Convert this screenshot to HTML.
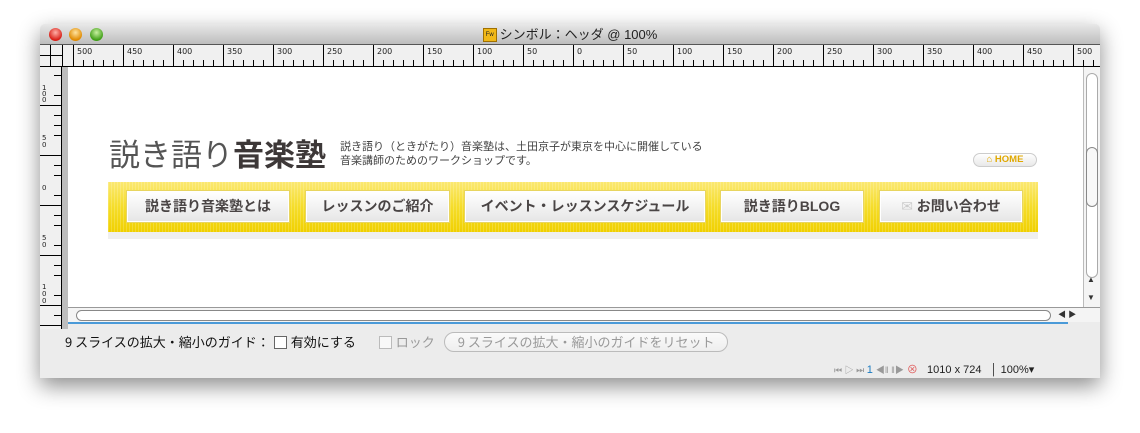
<!DOCTYPE html>
<html><head><meta charset="utf-8">
<style>
*{margin:0;padding:0;box-sizing:border-box}
body{width:1140px;height:433px;background:#fff;position:relative;overflow:hidden;font-family:"Liberation Sans","Noto Sans CJK JP",sans-serif}
.win{position:absolute;left:40px;top:24px;width:1060px;height:354px;background:#ececec;box-shadow:0 8px 22px rgba(0,0,0,.45);border-radius:5px 5px 0 0}
.title{position:absolute;left:0;top:0;width:1060px;height:21px;background:linear-gradient(#e8e8e8,#bdbdbd);border-radius:5px 5px 0 0;border-bottom:1px solid #555;text-align:center;font-size:13px;line-height:21px;color:#222}
.dot{position:absolute;top:4px;width:13px;height:13px;border-radius:50%}
.canvas{position:absolute;left:28px;top:43px;width:1015px;height:240px;background:#fff}
.nav{position:absolute;left:40px;top:115px;width:930px;height:50px;background:repeating-linear-gradient(90deg,rgba(255,255,255,.18) 0 1px,transparent 1px 3px),linear-gradient(#fbe870,#f5dd2a 50%,#f0d000)}
.btn{position:absolute;top:9px;height:31px;background:linear-gradient(#fff,#f3f3f3 50%,#e6e6e6);border:1px solid #fff;box-shadow:0 0 0 1px #e8d560;font-size:14px;font-weight:bold;color:#4a4545;text-align:center;line-height:29px}
</style></head><body>
<div class="win">
 <div class="title">
  <div class="dot" style="left:9px;background:radial-gradient(circle at 50% 35%,#ffb0a8,#d81e16 70%)"></div>
  <div class="dot" style="left:29px;background:radial-gradient(circle at 50% 35%,#ffe4a0,#e08a00 70%)"></div>
  <div class="dot" style="left:50px;background:radial-gradient(circle at 50% 35%,#c8f0a0,#3f9e16 70%)"></div>
  <span style="display:inline-block;width:14px;height:14px;background:#f0b818;border:1px solid #a07000;font-size:6px;line-height:12px;vertical-align:middle;margin-right:3px;position:relative;top:-1px">Fw</span>シンボル：ヘッダ @ 100%
 </div>
 <svg style="position:absolute;left:0;top:21px" width="1060" height="22">
  <defs><pattern id="tk" x="33" y="0" width="50" height="22" patternUnits="userSpaceOnUse">
   <rect x="0" y="0" width="1" height="22" fill="#000"/>
   <rect x="10" y="15" width="1" height="7" fill="#000"/><rect x="20" y="15" width="1" height="7" fill="#000"/>
   <rect x="30" y="15" width="1" height="7" fill="#000"/><rect x="40" y="15" width="1" height="7" fill="#000"/>
  </pattern></defs>
  <rect width="1060" height="22" fill="#f0f0f0"/>
  <rect x="28" width="1032" height="22" fill="url(#tk)"/>
  <rect x="0" y="21" width="1060" height="1" fill="#000"/>
  <rect x="22" y="0" width="1" height="22" fill="#000"/>
  <rect x="0" y="10" width="22" height="1" fill="#000"/><rect x="10" y="0" width="1" height="22" fill="#000"/>
  <g font-size="8" font-family="DejaVu Sans" fill="#222">
   <text x="37" y="9">500</text><text x="87" y="9">450</text><text x="137" y="9">400</text><text x="187" y="9">350</text><text x="237" y="9">300</text><text x="287" y="9">250</text><text x="337" y="9">200</text><text x="387" y="9">150</text><text x="437" y="9">100</text><text x="487" y="9">50</text><text x="537" y="9">0</text><text x="587" y="9">50</text><text x="637" y="9">100</text><text x="687" y="9">150</text><text x="737" y="9">200</text><text x="787" y="9">250</text><text x="837" y="9">300</text><text x="887" y="9">350</text><text x="937" y="9">400</text><text x="987" y="9">450</text><text x="1037" y="9">500</text>
  </g>
 </svg>
 <svg style="position:absolute;left:0;top:43px" width="28" height="262">
  <rect width="22" height="262" fill="#f0f0f0"/><rect x="22" width="6" height="262" fill="#bdbdbd"/>
  <rect x="21" width="1" height="262" fill="#000"/>
  <g fill="#000"><rect x="14" y="8" width="7" height="1"/><rect x="14" y="28" width="7" height="1"/><rect x="0" y="38" width="21" height="1"/><rect x="14" y="48" width="7" height="1"/><rect x="14" y="58" width="7" height="1"/><rect x="14" y="68" width="7" height="1"/><rect x="0" y="88" width="21" height="1"/><rect x="14" y="98" width="7" height="1"/><rect x="14" y="108" width="7" height="1"/><rect x="14" y="128" width="7" height="1"/><rect x="0" y="138" width="21" height="1"/><rect x="14" y="148" width="7" height="1"/><rect x="14" y="158" width="7" height="1"/><rect x="14" y="178" width="7" height="1"/><rect x="0" y="188" width="21" height="1"/><rect x="14" y="198" width="7" height="1"/><rect x="14" y="208" width="7" height="1"/><rect x="14" y="228" width="7" height="1"/><rect x="0" y="238" width="21" height="1"/><rect x="14" y="248" width="7" height="1"/><rect x="0" y="258" width="21" height="1"/></g>
  <g font-size="7" font-family="DejaVu Sans" fill="#222"><text x="2" y="23">1</text><text x="2" y="29">0</text><text x="2" y="35">0</text><text x="2" y="73">5</text><text x="2" y="80">0</text><text x="2" y="123">0</text><text x="2" y="173">5</text><text x="2" y="180">0</text><text x="2" y="222">1</text><text x="2" y="229">0</text><text x="2" y="236">0</text></g>
 </svg>
 <div class="canvas">
  <div style="position:absolute;left:41px;top:67px;font-size:31px;color:#555;letter-spacing:0;font-family:'Noto Sans CJK JP',sans-serif;line-height:38px;white-space:nowrap">説き語り<b style="color:#3d3838">音楽塾</b></div>
  <div style="position:absolute;left:272px;top:72px;font-size:11px;color:#444;line-height:14px;font-family:'Noto Sans CJK JP',sans-serif;white-space:nowrap">説き語り（ときがたり）音楽塾は、土田京子が東京を中心に開催している<br>音楽講師のためのワークショップです。</div>
  <div style="position:absolute;left:905px;top:86px;width:64px;height:14px;border-radius:7px;background:linear-gradient(#fff,#e8e8e8);border:1px solid #ccc;font-size:9.5px;font-weight:bold;color:#e0a800;text-align:center;line-height:12px">⌂ HOME</div>
  <div style="position:absolute;left:506px;top:111px;font-size:14px;color:#000;line-height:14px">+</div>
  <div class="nav">
   <div class="btn" style="left:19px;width:162px">説き語り音楽塾とは</div>
   <div class="btn" style="left:198px;width:143px">レッスンのご紹介</div>
   <div class="btn" style="left:357px;width:240px">イベント・レッスンスケジュール</div>
   <div class="btn" style="left:613px;width:142px">説き語りBLOG</div>
   <div class="btn" style="left:772px;width:142px"><span style="color:#ccc;font-weight:normal">✉</span> お問い合わせ</div>
  </div>
  <div style="position:absolute;left:40px;top:165px;width:930px;height:7px;background:#efefef"></div>
 </div>
 <div style="position:absolute;left:1043px;top:43px;width:17px;height:255px;background:#f4f4f4;border-left:1px solid #bbb">
  <div style="position:absolute;left:2px;top:6px;width:12px;height:205px;border:1px solid #aaa;border-radius:6px;background:#fff"></div>
  <div style="position:absolute;left:2px;top:80px;width:12px;height:60px;border:1px solid #888;border-radius:6px;background:#f8f8f8"></div>
  <div style="position:absolute;left:3px;top:208px;font-size:8px;color:#333">▲</div>
  <div style="position:absolute;left:3px;top:226px;font-size:8px;color:#333">▼</div>
 </div>
 <div style="position:absolute;left:28px;top:283px;width:1032px;height:15px;background:#f4f4f4;border-top:1px solid #999">
  <div style="position:absolute;left:8px;top:2px;width:975px;height:11px;border:1px solid #888;border-radius:6px;background:#fff"></div>
  <div style="position:absolute;left:990px;top:1px;font-size:8px;color:#333">◀ ▶</div>
 </div>
 <div style="position:absolute;left:28px;top:298px;width:1000px;height:2px;background:#4a9ad8"></div>
 <div style="position:absolute;left:25px;top:308px;font-size:13px;color:#111;line-height:18px;font-family:'Noto Sans CJK JP',sans-serif;white-space:nowrap">9 スライスの拡大・縮小のガイド：<span style="display:inline-block;width:13px;height:13px;border:1px solid #666;background:#fff;vertical-align:-2px;margin:0 4px 0 4px"></span>有効にする
  <span style="color:#999;margin-left:20px"><span style="display:inline-block;width:13px;height:13px;border:1px solid #bbb;background:#f8f8f8;vertical-align:-2px;margin-right:4px"></span>ロック</span>
  <span style="display:inline-block;margin-left:6px;border:1px solid #bbb;border-radius:10px;padding:0 13px;color:#999;background:linear-gradient(#fafafa,#eee)">9 スライスの拡大・縮小のガイドをリセット</span></div>
 <div style="position:absolute;left:794px;top:337px;font-size:11px;color:#222;white-space:nowrap"><span style="color:#999;font-size:9px">⏮ ▷ ⏭ </span><span style="color:#1a7ac0">1</span> <span style="color:#999;font-size:9px">◀‖ ‖▶</span> <span style="color:#e05a5a">⊗</span> &nbsp; 1010 x 724 &nbsp; │ 100%▾</div>
</div>
</body></html>
